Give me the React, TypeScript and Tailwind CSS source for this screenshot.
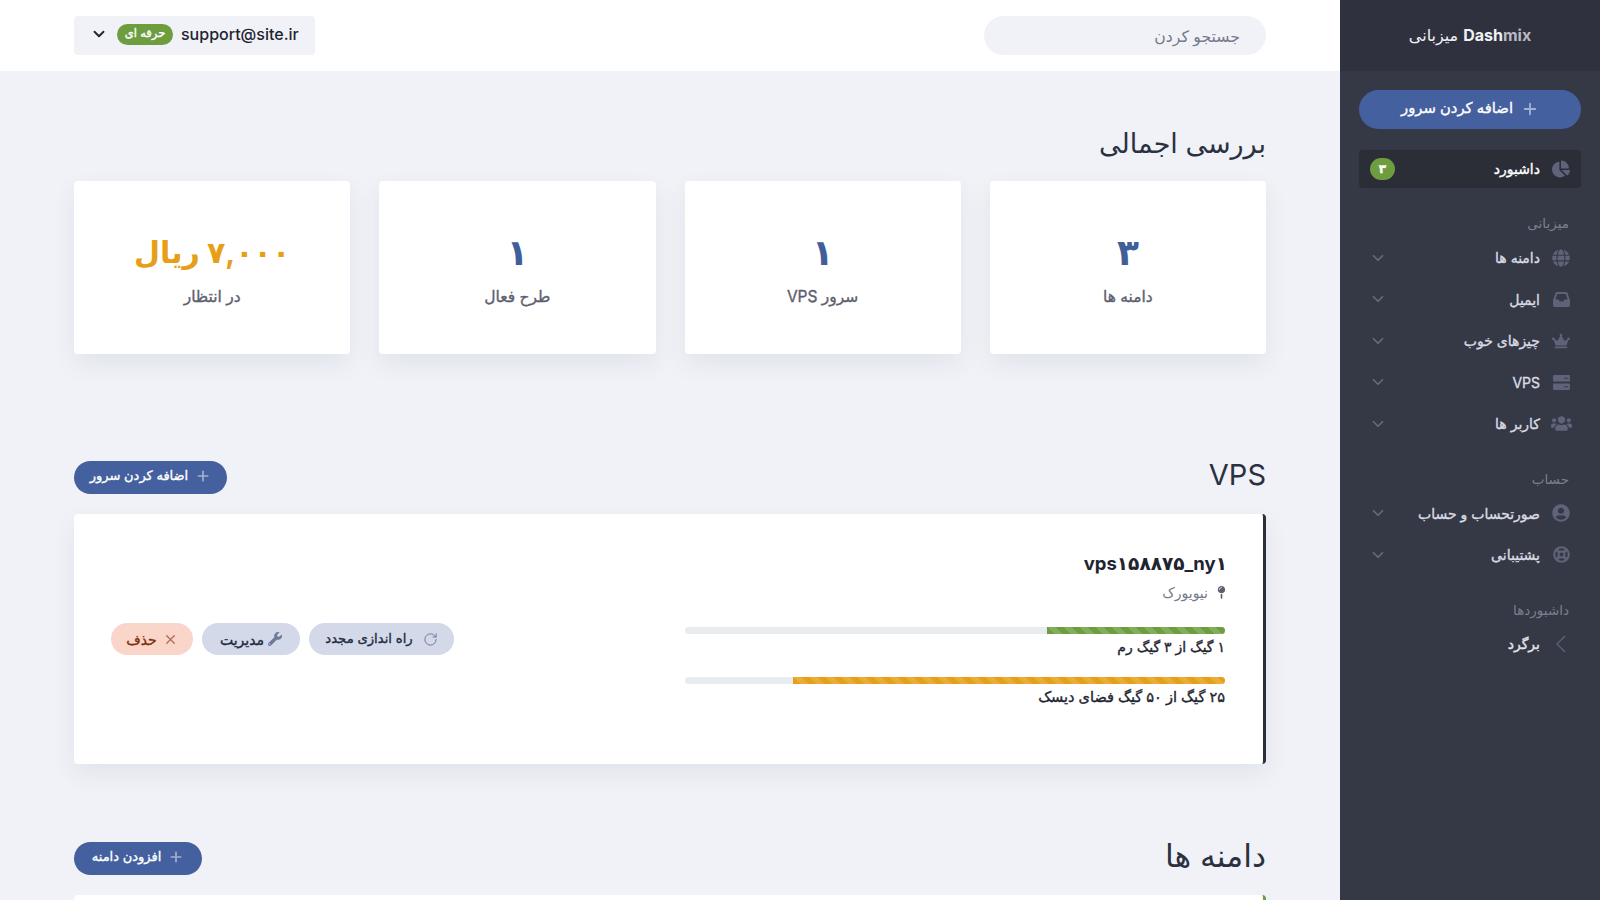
import { ReactNode } from "react";
import { ChevronDown, Plus, RotateCw, X } from "lucide-react";
import {
  FaChartPie,
  FaCrown,
  FaGlobe,
  FaMapPin,
  FaUserCircle,
  FaUsers,
  FaWrench,
} from "react-icons/fa";

const FONT = "font-['Inter','DejaVu_Sans',sans-serif]";
// DejaVu has no medium weight for Arabic, a thin stroke gets close to it
const MEDIUM = "[-webkit-text-stroke:0.35px_currentColor]";

function ServerIcon() {
  return (
    <svg viewBox="0 0 18 16" className="h-[15px] w-[17px] fill-current">
      <path
        fillRule="evenodd"
        d="M1 0h16a1 1 0 0 1 1 1v5a1 1 0 0 1-1 1H1a1 1 0 0 1-1-1V1a1 1 0 0 1 1-1Zm11 3v1h4V3h-4ZM1 9h16a1 1 0 0 1 1 1v5a1 1 0 0 1-1 1H1a1 1 0 0 1-1-1v-5a1 1 0 0 1 1-1Zm11 3v1h4v-1h-4Z"
      />
    </svg>
  );
}

function InboxIcon() {
  return (
    <svg viewBox="0 0 18 16" className="h-[15px] w-[17px] fill-current">
      <path
        fillRule="evenodd"
        d="M4 0h10a1.5 1.5 0 0 1 1.4 1L18 8.5V14a2 2 0 0 1-2 2H2a2 2 0 0 1-2-2V8.500L2.600 1A1.500 1.500 0 0 1 4 0Zm.4 2L2.500 8H6l1 2h4l1-2h3.500l-1.900-6H4.400Z"
      />
    </svg>
  );
}

function RingIcon() {
  return (
    <svg viewBox="0 0 18 18" className="h-[17px] w-[17px] fill-none stroke-current">
      <circle cx="9" cy="9" r="7.700" strokeWidth="2.200" />
      <circle cx="9" cy="9" r="3.200" strokeWidth="2" />
      <path d="M3.600 3.600 6.700 6.700M14.400 3.600 11.300 6.700M3.600 14.400 6.700 11.300M14.400 14.400 11.300 11.300" strokeWidth="3" />
    </svg>
  );
}

const hosting = [
  { label: "دامنه ها", icon: <FaGlobe /> },
  { label: "ایمیل", icon: <InboxIcon /> },
  { label: "چیزهای خوب", icon: <FaCrown /> },
  { label: "VPS", icon: <ServerIcon /> },
  { label: "کاربر ها", icon: <FaUsers className="shrink-0 text-[21px]" /> },
];

const account = [
  { label: "صورتحساب و حساب", icon: <FaUserCircle /> },
  { label: "پشتیبانی", icon: <RingIcon /> },
];

const stats = [
  { value: "۳", label: "دامنه ها", color: "text-[#3f5f9b] text-[36px]" },
  { value: "۱", label: "سرور VPS", color: "text-[#3f5f9b] text-[36px]" },
  { value: "۱", label: "طرح فعال", color: "text-[#3f5f9b] text-[36px]" },
  { value: "۷,۰۰۰ ریال", label: "در انتظار", color: "text-[#e69f17] text-[30px]" },
];

function NavItem({ label, icon }: { label: string; icon: ReactNode }) {
  return (
    <div className={`flex h-[41.5px] items-center pr-[11px] pl-[10px] text-[14px] text-[#d9dbe2] ${MEDIUM}`}>
      <span className="flex w-[18px] justify-center text-[18px] text-[#5f6379] [-webkit-text-stroke:0]">{icon}</span>
      <span className="mr-[12px] flex-1">{label}</span>
      <ChevronDown className="h-[18px] w-[18px] text-[#686c7e]" strokeWidth={2.2} />
    </div>
  );
}

function NavHeading({ children }: { children: ReactNode }) {
  return <div className="px-[12px] text-[13.5px] leading-[19px] text-[#7c7f90]">{children}</div>;
}

function Sidebar() {
  return (
    <aside className="flex h-[900px] w-[260px] shrink-0 flex-col bg-[#353845]">
      <div className="flex h-[71px] items-center justify-center bg-[#2f323e] pb-[2px] text-[16px] text-[#f1f2f5]">
        <span className="font-bold" dir="ltr">
          Dash<span className="text-[#b8bac4]">mix</span>
        </span>
        <span className="mr-[5px]">میزبانی</span>
      </div>
      <div className="flex flex-col px-[19px]">
        <button className={`mt-[19px] flex h-[39px] items-center justify-center gap-[8px] rounded-full bg-[#44609f] pb-[2px] text-[14.8px] text-white ${MEDIUM}`}>
          <Plus className="h-[18px] w-[18px] text-[#a3b1d0]" strokeWidth={2.5} />
          اضافه کردن سرور
        </button>
        <div className={`mt-[21px] flex h-[38px] items-center rounded-[4px] bg-[#2b2d37] pr-[11px] pl-[11px] text-[14px] text-white ${MEDIUM}`}>
          <FaChartPie className="w-[18px] text-[18px] text-[#5f6379]" />
          <span className="mr-[12px] flex-1 pb-[2px]">داشبورد</span>
          <span className="flex h-[22px] w-[25px] items-center justify-center rounded-full bg-[#6d9d3f] text-[12px] font-bold">
            ۳
          </span>
        </div>
        <div className="mt-[26px]">
          <NavHeading>میزبانی</NavHeading>
        </div>
        <div className="mt-[4px]">
          {hosting.map((item) => (
            <NavItem key={item.label} label={item.label} icon={item.icon} />
          ))}
        </div>
        <div className="mt-[25px]">
          <NavHeading>حساب</NavHeading>
        </div>
        <div className="mt-[4px]">
          {account.map((item) => (
            <NavItem key={item.label} label={item.label} icon={item.icon} />
          ))}
        </div>
        <div className="mt-[25px]">
          <NavHeading>داشبوردها</NavHeading>
        </div>
        <div className={`mt-[5px] flex h-[38px] items-center pr-[11px] text-[14px] text-[#e4e5ea] ${MEDIUM}`}>
          <span className="flex w-[18px] justify-center text-[#5f6379]">
            <svg viewBox="0 0 10 18" className="h-[18px] w-[10px] fill-none stroke-current stroke-[1.2]">
              <polyline points="9,1 1,9 9,17" />
            </svg>
          </span>
          <span className="mr-[12px]">برگرد</span>
        </div>
      </div>
    </aside>
  );
}

function Header() {
  return (
    <header className="flex h-[71px] shrink-0 items-center justify-between bg-white px-[74px]">
      <div className="flex h-[39px] w-[282px] items-center rounded-full bg-[#f0f2f7] px-[26px] pt-[2px] text-[15.7px] text-[#75788a]">
        جستجو کردن
      </div>
      <div dir="ltr" className="flex h-[39px] w-[241px] items-center rounded-[4px] bg-[#f0f2f7] pb-[3px] pl-[16px] text-[#1e2430]">
        <ChevronDown className="h-[18px] w-[18px]" strokeWidth={2.5} />
        <span dir="rtl" className={`ml-[9px] flex h-[21px] w-[56px] items-center justify-center rounded-full bg-[#6d9d3f] text-[11.5px] text-white ${MEDIUM}`}>
          حرفه ای
        </span>
        <span className="ml-[8px] text-[16px] font-medium">support@site.ir</span>
      </div>
    </header>
  );
}

function StatCard({ value, label, color }: { value: string; label: string; color: string }) {
  return (
    <div className="flex h-[173px] flex-col items-center justify-center rounded-[4px] bg-white shadow-[0_10px_24px_rgba(60,70,110,0.08)]">
      <div className={`leading-[48px] font-bold ${color}`}>{value}</div>
      <div className={`mt-[7px] pt-[4px] text-[15.5px] leading-[20px] text-[#5c606e] ${MEDIUM}`}>{label}</div>
    </div>
  );
}

function Usage({ fill, color, text, size }: { fill: string; color: string; text: string; size: string }) {
  return (
    <div>
      <div className="h-[7px] w-full overflow-hidden rounded-full bg-[#e9ecef]">
        <div className={`h-full bg-[linear-gradient(45deg,rgba(255,255,255,0.15)_25%,transparent_25%,transparent_50%,rgba(255,255,255,0.15)_50%,rgba(255,255,255,0.15)_75%,transparent_75%,transparent)] bg-[length:16px_16px] ${fill} ${color}`} />
      </div>
      <div className={`mt-[2px] text-[#1e2430] ${size} ${MEDIUM}`}>{text}</div>
    </div>
  );
}

function SectionHead({ title, button, width, size }: { title: string; button: string; width: string; size: string }) {
  return (
    <div className="flex items-center justify-between">
      <h2 className={`leading-[40px] text-[#2b3140] ${size}`}>{title}</h2>
      <button className={`mt-[4px] flex h-[33px] items-center justify-center gap-[7px] rounded-full bg-[#44609f] pb-[2px] text-[13px] text-white ${width} ${MEDIUM}`}>
        <Plus className="h-[16px] w-[16px] text-[#a3b1d0]" strokeWidth={2.5} />
        {button}
      </button>
    </div>
  );
}

function VpsCard() {
  return (
    <div className="mt-[19px] flex h-[250px] items-center justify-between rounded-[4px] border-r-[3px] border-r-[#2b2f3a] bg-white pr-[38px] pl-[37px] shadow-[0_10px_24px_rgba(60,70,110,0.08)]">
      <div className="mb-[20px] w-[540px]">
        <div className="-mr-[2px] text-[18.5px] font-bold text-[#1e2430]">vps۱۵۸۸۷۵_ny۱</div>
        <div className="mt-[4px] -mr-[3px] flex items-center gap-[7px] text-[14px] text-[#75788a]">
          <FaMapPin className="text-[13px] text-[#5c606e]" />
          نیویورک
        </div>
        <div className="mt-[24px]">
          <Usage fill="w-[33%]" color="bg-[#6d9d3f]" text="۱ گیگ از ۳ گیگ رم" size="text-[14px]" />
        </div>
        <div className="mt-[20px]">
          <Usage fill="w-[80%]" color="bg-[#e69f17]" text="۲۵ گیگ از ۵۰ گیگ فضای دیسک" size="text-[14.5px]" />
        </div>
      </div>
      <div className="flex items-center gap-[9px]">
        <button className={`flex h-[32px] w-[145px] items-center justify-center gap-[10px] rounded-full bg-[#d3d9e8] text-[13.2px] text-[#222a44] ${MEDIUM}`}>
          <RotateCw className="h-[15px] w-[15px] text-[#6d7a9a]" strokeWidth={1.6} />
          راه اندازی مجدد
        </button>
        <button className={`flex h-[32px] w-[98px] items-center justify-center gap-[4px] rounded-full bg-[#d3d9e8] text-[14px] text-[#222a44] ${MEDIUM}`}>
          <FaWrench className="text-[14px] text-[#6d7a9a]" />
          مدیریت
        </button>
        <button className={`flex h-[32px] w-[82px] items-center justify-center gap-[6px] rounded-full bg-[#fad6ca] text-[14px] text-[#7f2d0c] ${MEDIUM}`}>
          <X className="h-[15px] w-[15px] text-[#b06a50]" />
          حذف
        </button>
      </div>
    </div>
  );
}

export default function App() {
  return (
    <div dir="rtl" className={`flex h-[900px] w-[1600px] overflow-hidden bg-[#f0f2f7] ${FONT}`}>
      <Sidebar />
      <main className="flex min-w-0 flex-1 flex-col">
        <Header />
        <div className="px-[74px]">
          <h2 className="mt-[53px] text-[27px] leading-[40px] text-[#2b3140]">بررسی اجمالی</h2>
          <div className="mt-[17px] grid grid-cols-4 gap-[29px]">
            {stats.map((stat) => (
              <StatCard key={stat.label} value={stat.value} label={stat.label} color={stat.color} />
            ))}
          </div>
          <div className="mt-[101px]">
            <SectionHead title="VPS" button="اضافه کردن سرور" width="w-[153px]" size="text-[29px]" />
          </div>
          <VpsCard />
          <div className="mt-[72px]">
            <SectionHead title="دامنه ها" button="افزودن دامنه" width="w-[128px]" size="text-[31.5px]" />
          </div>
          <div className="mt-[19px] h-[200px] rounded-[4px] border-r-[3px] border-r-[#6d9d3f] bg-white" />
        </div>
      </main>
    </div>
  );
}
